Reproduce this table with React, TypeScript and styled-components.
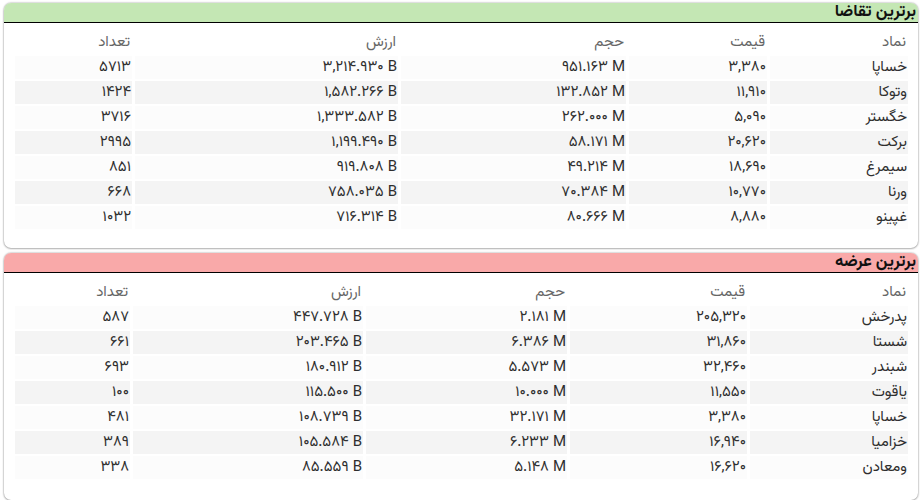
import React, { FunctionComponent } from 'react';
import styled, { createGlobalStyle } from 'styled-components';

const GlobalStyle = createGlobalStyle`
    html, body {
        margin: 0;
        padding: 0;
        background: #ffffff;
    }
    body {
        font-family: 'Vazirmatn', 'Noto Sans Arabic', 'DejaVu Sans', sans-serif;
        direction: rtl;
    }
`;

interface IRow {
    readonly symbol: string;
    readonly price: string;
    readonly volume: string;
    readonly value: string;
    readonly count: string;
}

const demandRows: IRow[] = [
    { symbol: 'خساپا', price: '۳,۳۸۰', volume: '۹۵۱.۱۶۳ M', value: '۳,۲۱۴.۹۳۰ B', count: '۵۷۱۳' },
    { symbol: 'وتوکا', price: '۱۱,۹۱۰', volume: '۱۳۲.۸۵۲ M', value: '۱,۵۸۲.۲۶۶ B', count: '۱۴۲۴' },
    { symbol: 'خگستر', price: '۵,۰۹۰', volume: '۲۶۲.۰۰۰ M', value: '۱,۳۳۳.۵۸۲ B', count: '۳۷۱۶' },
    { symbol: 'برکت', price: '۲۰,۶۲۰', volume: '۵۸.۱۷۱ M', value: '۱,۱۹۹.۴۹۰ B', count: '۲۹۹۵' },
    { symbol: 'سیمرغ', price: '۱۸,۶۹۰', volume: '۴۹.۲۱۴ M', value: '۹۱۹.۸۰۸ B', count: '۸۵۱' },
    { symbol: 'ورنا', price: '۱۰,۷۷۰', volume: '۷۰.۳۸۴ M', value: '۷۵۸.۰۳۵ B', count: '۶۶۸' },
    { symbol: 'غپینو', price: '۸,۸۸۰', volume: '۸۰.۶۶۶ M', value: '۷۱۶.۳۱۴ B', count: '۱۰۳۲' },
];

const supplyRows: IRow[] = [
    { symbol: 'پدرخش', price: '۲۰۵,۳۲۰', volume: '۲.۱۸۱ M', value: '۴۴۷.۷۲۸ B', count: '۵۸۷' },
    { symbol: 'شستا', price: '۳۱,۸۶۰', volume: '۶.۳۸۶ M', value: '۲۰۳.۴۶۵ B', count: '۶۶۱' },
    { symbol: 'شبندر', price: '۳۲,۴۶۰', volume: '۵.۵۷۳ M', value: '۱۸۰.۹۱۲ B', count: '۶۹۳' },
    { symbol: 'یاقوت', price: '۱۱,۵۵۰', volume: '۱۰.۰۰۰ M', value: '۱۱۵.۵۰۰ B', count: '۱۰۰' },
    { symbol: 'خساپا', price: '۳,۳۸۰', volume: '۳۲.۱۷۱ M', value: '۱۰۸.۷۳۹ B', count: '۴۸۱' },
    { symbol: 'خزامیا', price: '۱۶,۹۴۰', volume: '۶.۲۳۳ M', value: '۱۰۵.۵۸۴ B', count: '۳۸۹' },
    { symbol: 'ومعادن', price: '۱۶,۶۲۰', volume: '۵.۱۴۸ M', value: '۸۵.۵۵۹ B', count: '۳۳۸' },
];

const Page = styled.div`
    display: flex;
    flex-direction: column;
    gap: 5px;
    padding: 3px 4px 0 4px;
`;

const Card = styled.section<{ $height: number }>`
    height: ${(p) => p.$height}px;
    box-sizing: border-box;
    border-radius: 7px;
    background: #ffffff;
    box-shadow: 0 0 2px rgba(0, 0, 0, 0.45), 0 1px 2px rgba(0, 0, 0, 0.2);
    overflow: hidden;
`;

const CardHeader = styled.header<{ $color: string }>`
    height: 19px;
    line-height: 19px;
    background: ${(p) => p.$color};
    border-bottom: 1px solid #000000;
    padding: 0 2px;
    font-size: 16.5px;
    font-weight: bold;
    color: #111111;
    white-space: nowrap;
`;

const Table = styled.table`
    width: 899px;
    margin: 6px 7px 0 0;
    table-layout: fixed;
    border-collapse: separate;
    border-spacing: 3px 2px;
    font-size: 15px;
`;

const HeadCell = styled.th`
    height: 21px;
    padding: 0 2px;
    text-align: right;
    font-weight: normal;
    color: #666666;
`;

const Cell = styled.td`
    height: 22.4px;
    padding: 0 1px 0 2px;
    text-align: right;
    color: #2e2e2e;
    white-space: nowrap;
`;

const BodyRow = styled.tr<{ $odd: boolean }>`
    & > td {
        background: ${(p) => (p.$odd ? '#f4f4f4' : '#fcfcfc')};
    }
`;

const NumberText = styled.span`
    direction: ltr;
    unicode-bidi: isolate;
`;

interface IMarketTableProps {
    readonly title: string;
    readonly color: string;
    readonly height: number;
    readonly widths: number[];
    readonly rows: IRow[];
}

const MarketTable: FunctionComponent<IMarketTableProps> = ({ title, color, height, widths, rows }) => (
    <Card $height={height}>
        <CardHeader $color={color}>{title}</CardHeader>
        <Table>
            <colgroup>
                {widths.map((w, i) => (
                    <col key={i} style={{ width: w }} />
                ))}
            </colgroup>
            <thead>
                <tr>
                    <HeadCell>نماد</HeadCell>
                    <HeadCell>قیمت</HeadCell>
                    <HeadCell>حجم</HeadCell>
                    <HeadCell>ارزش</HeadCell>
                    <HeadCell>تعداد</HeadCell>
                </tr>
            </thead>
            <tbody>
                {rows.map((r, i) => (
                    <BodyRow key={r.symbol + i} $odd={i % 2 === 1}>
                        <Cell>{r.symbol}</Cell>
                        <Cell>
                            <NumberText>{r.price}</NumberText>
                        </Cell>
                        <Cell>
                            <NumberText>{r.volume}</NumberText>
                        </Cell>
                        <Cell>
                            <NumberText>{r.value}</NumberText>
                        </Cell>
                        <Cell>
                            <NumberText>{r.count}</NumberText>
                        </Cell>
                    </BodyRow>
                ))}
            </tbody>
        </Table>
    </Card>
);

const App: FunctionComponent = () => (
    <>
        <GlobalStyle />
        <Page>
            <MarketTable
                title="برترین تقاضا"
                color="#c4e7b4"
                height={245}
                widths={[138, 138, 225, 263, 117]}
                rows={demandRows}
            />
            <MarketTable
                title="برترین عرضه"
                color="#f9a9a9"
                height={247}
                widths={[158, 177, 201, 230, 115]}
                rows={supplyRows}
            />
        </Page>
    </>
);

export default App;
